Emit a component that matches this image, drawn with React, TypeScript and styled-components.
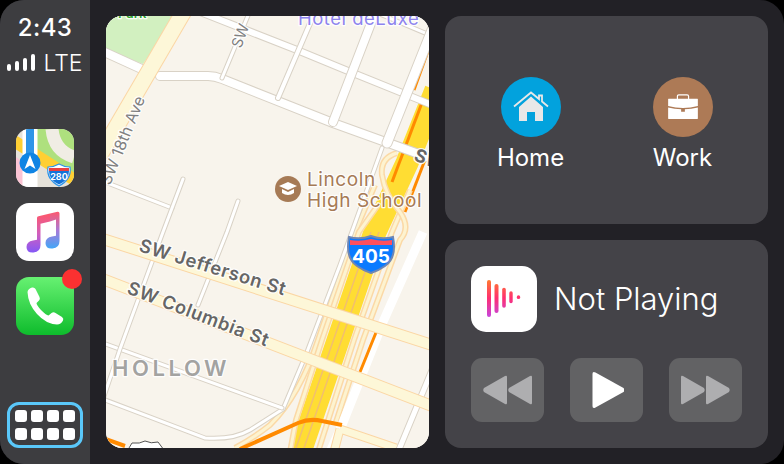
import React from 'react';
import styled, { createGlobalStyle } from 'styled-components';

const GlobalStyle = createGlobalStyle`
    html, body {
        margin: 0;
        padding: 0;
        width: 784px;
        height: 464px;
        overflow: hidden;
        background: #000;
        font-family: Inter, "Liberation Sans", sans-serif;
    }
`;

const Screen = styled.div`
    display: flex;
    width: 784px;
    height: 464px;
    border-radius: 24px;
    overflow: hidden;
    background: #222126;
`;

const Sidebar = styled.aside`
    display: flex;
    flex-direction: column;
    align-items: center;
    flex: 0 0 90px;
    height: 464px;
    padding: 14px 0 16px;
    box-sizing: border-box;
    background: #3d3d40;
`;

const Time = styled.div`
    color: #fff;
    font-size: 24px;
    line-height: 28px;
    font-weight: 500;
    letter-spacing: 0.4px;
`;

const StatusRow = styled.div`
    display: flex;
    align-items: flex-end;
    gap: 8px;
    margin-top: 8px;
    height: 26px;
`;

const Bars = styled.div`
    display: flex;
    align-items: flex-end;
    gap: 4px;
    padding-bottom: 5px;
`;

const Bar = styled.span<{ $height: number }>`
    display: block;
    width: 4px;
    height: ${props => props.$height}px;
    border-radius: 2px;
    background: #fff;
`;

const Lte = styled.div`
    color: #fff;
    font-size: 23px;
    line-height: 26px;
    font-weight: 300;
`;

const AppList = styled.div`
    display: flex;
    flex-direction: column;
    gap: 16px;
    margin-top: 53px;
`;

const AppIcon = styled.div`
    position: relative;
    width: 58px;
    height: 58px;
    border-radius: 13px;
`;

const IconArt = styled.svg`
    display: block;
    width: 58px;
    height: 58px;
    border-radius: 13px;
`;

const Badge = styled.span`
    position: absolute;
    top: -8px;
    right: -8px;
    width: 20px;
    height: 20px;
    border-radius: 50%;
    background: #fb3131;
`;

const AppsButton = styled.div`
    display: grid;
    grid-template-columns: repeat(4, 12px);
    grid-template-rows: repeat(2, 12px);
    gap: 6px 4px;
    justify-content: center;
    align-content: center;
    width: 76px;
    height: 46px;
    margin-top: auto;
    box-sizing: border-box;
    border: 3px solid #5ac8fa;
    border-radius: 12px;
`;

const AppsDot = styled.span`
    border-radius: 3px;
    background: #fff;
`;

const Main = styled.main`
    display: flex;
    flex: 1;
    gap: 16px;
    height: 464px;
    padding: 16px;
    box-sizing: border-box;
`;

const MapPanel = styled.section`
    flex: 0 0 323px;
    height: 432px;
    border-radius: 16px;
    overflow: hidden;
    background: #f8f4ec;
`;

const MapArt = styled.svg`
    display: block;
    width: 323px;
    height: 432px;
    font-family: Inter, "Liberation Sans", sans-serif;

    text {
        paint-order: stroke;
        stroke: rgba(255, 255, 255, 0.9);
        stroke-width: 2.5px;
        stroke-linejoin: round;
    }
`;

const RightColumn = styled.div`
    display: flex;
    flex-direction: column;
    flex: 1;
    gap: 16px;
`;

const Card = styled.section`
    flex: 0 0 208px;
    box-sizing: border-box;
    border-radius: 16px;
    background: #444348;
`;

const PlacesCard = styled(Card)`
    display: flex;
    justify-content: center;
    align-items: center;
    padding-top: 10px;
`;

const Place = styled.div`
    display: flex;
    flex-direction: column;
    align-items: center;
    gap: 6px;
    width: 152px;
`;

const PlaceCircle = styled.div<{ $color: string }>`
    display: flex;
    align-items: center;
    justify-content: center;
    width: 60px;
    height: 60px;
    border-radius: 50%;
    background: ${props => props.$color};
`;

const PlaceLabel = styled.div`
    color: #fff;
    font-size: 24px;
    line-height: 30px;
    font-weight: 400;
`;

const PlayerCard = styled(Card)`
    display: flex;
    flex-direction: column;
    gap: 26px;
    padding: 26px;
`;

const NowPlaying = styled.div`
    display: flex;
    align-items: center;
    gap: 17px;
`;

const PodcastIcon = styled.div`
    display: flex;
    align-items: center;
    justify-content: center;
    width: 66px;
    height: 66px;
    border-radius: 15px;
    background: #fff;
`;

const Title = styled.div`
    color: #fff;
    font-size: 31px;
    line-height: 38px;
    font-weight: 300;
`;

const Controls = styled.div`
    display: flex;
    justify-content: space-between;
`;

const ControlButton = styled.button`
    display: flex;
    align-items: center;
    justify-content: center;
    width: 73px;
    height: 64px;
    padding: 0;
    border: 0;
    border-radius: 11px;
    background: #626264;
`;

const Mirrored = styled.span`
    display: flex;
    transform: scaleX(-1);
`;

// coordinates below are screen pixels, the map svg uses the same space via its viewBox
const streets: { d: string; w: number }[] = [
    { d: 'M100 50 L146 71', w: 8 },
    { d: 'M160 76 L208 76 Q215 76 222 79 L333 123 L430 158', w: 8 },
    { d: 'M190 8 L297 50 L348 71 L432 105', w: 6 },
    { d: 'M375 12 L432 36', w: 3 },
    { d: 'M320 0 L278 98', w: 4 },
    { d: 'M380 0 L333 122', w: 8 },
    { d: 'M252 6 L222 78', w: 3 },
    { d: 'M432 30 L387 143', w: 9 },
    { d: 'M382 148 L340 265 L307 352 L283 409 L250 430 Q233 440 205 438 L100 398', w: 3 },
    { d: 'M100 342 L282 408', w: 3 },
    { d: 'M100 180 L172 208', w: 3 },
    { d: 'M100 130 L116 137', w: 3 },
    { d: 'M183 179 L163 232 L120 349 L102 402', w: 3 },
    { d: 'M238 201 L227 232 L198 305', w: 3 },
    { d: 'M432 370 L398 452', w: 5 },
];

const ramps: string[] = [
    'M375 185 L355 232 L318 340 Q300 395 270 425 Q255 437 235 448',
    'M378 205 L359 232 L322 340 L296 420 L290 452',
    'M410 190 L392 232 L354 340 L325 430 L318 452',
    'M397 153 Q380 158 382 175 Q385 195 400 212 Q411 228 400 240 L363 340 L335 425',
];

const Road = ({ d, w }: { d: string; w: number }) => (
    <>
        <path d={d} fill="none" stroke="#d9d2c6" strokeWidth={w + 2} strokeLinecap="round" />
        <path d={d} fill="none" stroke="#fff" strokeWidth={w} strokeLinecap="round" />
    </>
);

const Avenue = ({ d, w }: { d: string; w: number }) => (
    <>
        <path d={d} fill="none" stroke="#fbd6a4" strokeWidth={w + 2} />
        <path d={d} fill="none" stroke="#fdf7d8" strokeWidth={w} />
    </>
);

const MapView = () => (
    <MapArt viewBox="106 16 323 432">
        <rect x="106" y="16" width="323" height="432" fill="#f8f4ec" />
        <path d="M106 16 H176 L143 64 L106 50 Z" fill="#d2f0c0" />

        {/* freeway, under the surface streets */}
        <path d="M436 90 L407 163 L375 232 L300 452" fill="none" stroke="#ffdd33" strokeWidth={23} />
        <path d="M432 40 L414 90" fill="none" stroke="#ff8a00" strokeWidth={3} />
        <path d="M423 100 L392 182" fill="none" stroke="#ff8a00" strokeWidth={3} />
        <path d="M428 152 L405 212" fill="none" stroke="#ff8a00" strokeWidth={3} />
        <path d="M379 232 L304 448 M371 232 L296 448" fill="none" stroke="#f2bf6e" strokeWidth={1.5} />
        {ramps.map(d => (
            <React.Fragment key={d}>
                <path d={d} fill="none" stroke="#fbd9a6" strokeWidth={6} />
                <path d={d} fill="none" stroke="#fdf3d0" strokeWidth={3} />
            </React.Fragment>
        ))}

        {streets.map(street => (
            <Road key={street.d} d={street.d} w={street.w} />
        ))}
        <Avenue d="M187 6 L100 155" w={15} />

        <path d="M423 232 L383 322 L342 425 L330 452" fill="none" stroke="#fff" strokeWidth={9} />
        <path d="M377 330 L360 372" fill="none" stroke="#ff8a00" strokeWidth={3} />

        <Avenue d="M100 238 L432 345" w={10} />
        <Avenue d="M100 278 L432 406" w={10} />
        <Avenue d="M340 429 L396 448 M340 429 L334 452" w={7} />
        <path d="M240 449 L298 423 Q310 418 322 421 L342 425" fill="none" stroke="#ff8a00" strokeWidth={4} />
        <path d="M100 437 L125 446" fill="none" stroke="#ff8a00" strokeWidth={4} />
        <path d="M129 448 L132 443 Q140 444 145 441 Q151 444 158 442 L164 450" fill="#fff" stroke="#555" strokeWidth={1} />

        <text x="298" y="25" fontSize="18.5" fill="#8d83ee" letterSpacing="0.5">Hotel deLuxe</text>
        <text x="118" y="17.5" fontSize="13" fill="#2fa52f" fontWeight="600">Park</text>
        <text transform="translate(110 186) rotate(-68)" fontSize="16" fill="#808080">SW 18th Ave</text>
        <text transform="translate(241 49) rotate(-70)" fontSize="15" fill="#808080">SW</text>
        <text transform="translate(413 160) rotate(21)" fontSize="18" fontWeight="700" fill="#666">SW</text>

        <circle cx="288" cy="189" r="13" fill="#a67a55" />
        <path d="M279 186 L288 182 L297 186 L288 190 Z" fill="#fff" />
        <path d="M282 189 V193 Q288 197 294 193 V189 L288 192 Z" fill="#fff" />
        <text x="307" y="186" fontSize="19" fill="#a67a55" letterSpacing="0.6">Lincoln</text>
        <text x="307" y="207" fontSize="19" fill="#a67a55" letterSpacing="0.6">High School</text>

        <text transform="translate(138 251) rotate(17)" fontSize="18.4" fontWeight="600" fill="#666" letterSpacing="0.6">SW Jefferson St</text>
        <text transform="translate(126 293) rotate(21)" fontSize="18.3" fontWeight="600" fill="#666" letterSpacing="0.6">SW Columbia St</text>
        <text x="112" y="376" fontSize="22" fontWeight="600" fill="#a3a3a1" letterSpacing="3.6">HOLLOW</text>

        {/* interstate shield */}
        <path
            d="M349 237 Q360 240 371 236 Q382 240 393 237 Q397 258 385 266 Q378 271 371 273 Q364 271 357 266 Q345 258 349 237 Z"
            fill="#0a7aff"
            stroke="#6f86b4"
            strokeWidth={2}
        />
        <path d="M350 240 Q360 242 371 239 Q382 242 392 240 L392 245 H350 Z" fill="#ff4f5f" />
        <text x="371" y="263" textAnchor="middle" fontSize="19" fontWeight="700" fill="#fff" style={{ stroke: 'none' }}>405</text>
    </MapArt>
);

const MapsIcon = () => (
    <IconArt viewBox="0 0 58 58">
        <rect width="58" height="58" fill="#e6e2da" />
        <path d="M21 0 H58 V50 L21 26 Z" fill="#aee07e" />
        <path d="M36 0 Q38 22 58 28" fill="none" stroke="#f0ede4" strokeWidth={13} />
        <path d="M-2 12 L60 52" stroke="#ffcf33" strokeWidth={12} fill="none" />
        <path d="M0 28 L7 33 V58 H0 Z" fill="#fbc4d4" />
        <path d="M14 0 V58" stroke="#fff" strokeWidth={15} fill="none" />
        <path d="M14 0 V34" stroke="#2f95e8" strokeWidth={8} fill="none" />
        <circle cx="14" cy="34" r="10.5" fill="#0f84e4" />
        <path d="M14 26 L19.5 40 L14 36.5 L8.5 40 Z" fill="#fff" />
        <path d="M32 38 Q38 38 43 35 Q48 38 54 38 Q56 50 43 57 Q30 50 32 38 Z" fill="#fff" stroke="#2f95e8" strokeWidth={1.2} />
        <rect x="33" y="39" width="20" height="3" fill="#e84040" />
        <path d="M33 42 H53 Q53 51 43 55.5 Q33 51 33 42 Z" fill="#1473d8" />
        <text x="43" y="51" textAnchor="middle" fontSize="9" fontWeight="700" fill="#fff">280</text>
    </IconArt>
);

const MusicIcon = () => (
    <IconArt viewBox="0 0 58 58">
        <defs>
            <linearGradient id="musicLeft" gradientUnits="userSpaceOnUse" x1="0" y1="12" x2="0" y2="50">
                <stop offset="0" stopColor="#fb5870" />
                <stop offset="0.5" stopColor="#d05fbe" />
                <stop offset="1" stopColor="#8258f8" />
            </linearGradient>
            <linearGradient id="musicRight" gradientUnits="userSpaceOnUse" x1="0" y1="9" x2="0" y2="46">
                <stop offset="0" stopColor="#fb5870" />
                <stop offset="0.5" stopColor="#a87ad8" />
                <stop offset="1" stopColor="#3fa8f8" />
            </linearGradient>
        </defs>
        <rect width="58" height="58" fill="#fff" />
        <path
            d="M21 15 Q21 13.500 22.500 13.200 L34 10.500 V18.500 L24.500 20.700 V42 Q24.500 49 17.500 49.500 Q10.500 50 10.500 44 Q10.500 38.500 17 37.500 L21 36.700 Z"
            fill="url(#musicLeft)"
        />
        <path
            d="M34 10.500 L41.500 8.800 Q43.500 8.500 43.500 10.500 V38 Q43.500 45 36.500 45.500 Q29.500 46 29.500 40 Q29.500 34.500 36 33.500 L40 32.700 V16.500 L34 18.500 Z"
            fill="url(#musicRight)"
        />
    </IconArt>
);

const PhoneIcon = () => (
    <IconArt viewBox="0 0 58 58">
        <defs>
            <linearGradient id="phoneBg" x1="0" y1="0" x2="0" y2="1">
                <stop offset="0" stopColor="#67f172" />
                <stop offset="1" stopColor="#0ebc2c" />
            </linearGradient>
        </defs>
        <rect width="58" height="58" fill="url(#phoneBg)" />
        <path
            d="M11.500 15 Q12 11.500 16 10.500 Q18.500 10 19.500 12 L23.500 20 Q24.500 22 23 23.500 L20.500 26 Q20.500 28 25 33 Q30 38 32.500 38.500 L35.500 36 Q37.500 34.500 39.500 36 L46 40 Q48 41.500 47 43.500 Q45 47.500 41 47.500 Q30 47 21 37 Q12 27 11.500 15 Z"
            fill="#fff"
        />
    </IconArt>
);

const HomeGlyph = () => (
    <svg width="36" height="32" viewBox="0 0 36 32">
        <path d="M1 15.500 L18 1.500 L26 8 V4.500 H29 V10.500 L35 15.500" fill="none" stroke="#e8e8e8" strokeWidth={1.8} />
        <path d="M6 16 L18 5.500 L30 16 V30 H22 V21 H14 V30 H6 Z" fill="#e8e8e8" />
    </svg>
);

const WorkGlyph = () => (
    <svg width="32" height="26" viewBox="0 0 34 28">
        <path d="M11 5.500 V2.500 Q11 1 12.500 1 H21.500 Q23 1 23 2.500 V5.500" fill="none" stroke="#fff" strokeWidth={1.3} />
        <path d="M1 5.500 Q1 5 1.500 5 H32.500 Q33 5 33 5.500 V13 Q17 17 1 13 Z" fill="#fff" />
        <path d="M1 14.500 Q8 16 15 16.500 V19 H19 V16.500 Q26 16 33 14.500 V26.500 Q33 27 32.500 27 H1.500 Q1 27 1 26.500 Z" fill="#fff" />
    </svg>
);

const PodcastGlyph = () => (
    <svg width="36" height="38" viewBox="0 0 36 38">
        <defs>
            <linearGradient id="podcastWave" gradientUnits="userSpaceOnUse" x1="0" y1="0" x2="0" y2="36">
                <stop offset="0" stopColor="#ff7a2f" />
                <stop offset="0.5" stopColor="#ff2f70" />
                <stop offset="1" stopColor="#c945d8" />
            </linearGradient>
        </defs>
        <g stroke="url(#podcastWave)" strokeLinecap="round" fill="none">
            <path d="M3 2 V35" strokeWidth={4} />
            <path d="M10.500 6 V31" strokeWidth={4} />
            <path d="M18 9.500 V26" strokeWidth={3.6} />
            <path d="M25 13 V21.500" strokeWidth={3.4} />
            <path d="M32.500 17 V17.400" strokeWidth={3.4} />
        </g>
    </svg>
);

const Transport = ({ kind }: { kind: 'back' | 'play' | 'forward' }) => {
    if (kind === 'play') {
        return (
            <svg width="34" height="38" viewBox="-1.500 0 34 38">
                <path d="M1 3 Q1 0 4 1.500 L32 17 Q34 19 32 21 L4 36.500 Q1 38 1 35 Z" fill="#fff" />
            </svg>
        );
    }
    const glyph = (
        <svg width="51" height="30" viewBox="0 0 51 30">
            <path d="M1 2 Q1 0 3 1 L24 13 Q25.500 15 24 17 L3 29 Q1 30 1 28 Z" fill="#aeaeb0" />
            <path d="M26 2 Q26 0 28 1 L49 13 Q50.500 15 49 17 L28 29 Q26 30 26 28 Z" fill="#aeaeb0" />
        </svg>
    );
    return kind === 'back' ? <Mirrored>{glyph}</Mirrored> : glyph;
};

const App = () => (
    <>
        <GlobalStyle />
        <Screen>
            <Sidebar>
                <Time>2:43</Time>
                <StatusRow>
                    <Bars>
                        {[7, 10, 13, 17].map(height => (
                            <Bar key={height} $height={height} />
                        ))}
                    </Bars>
                    <Lte>LTE</Lte>
                </StatusRow>
                <AppList>
                    <AppIcon>
                        <MapsIcon />
                    </AppIcon>
                    <AppIcon>
                        <MusicIcon />
                    </AppIcon>
                    <AppIcon>
                        <PhoneIcon />
                        <Badge />
                    </AppIcon>
                </AppList>
                <AppsButton>
                    {Array.from({ length: 8 }, (_, index) => (
                        <AppsDot key={index} />
                    ))}
                </AppsButton>
            </Sidebar>
            <Main>
                <MapPanel>
                    <MapView />
                </MapPanel>
                <RightColumn>
                    <PlacesCard>
                        <Place>
                            <PlaceCircle $color="#02a2dd">
                                <HomeGlyph />
                            </PlaceCircle>
                            <PlaceLabel>Home</PlaceLabel>
                        </Place>
                        <Place>
                            <PlaceCircle $color="#ad7a56">
                                <WorkGlyph />
                            </PlaceCircle>
                            <PlaceLabel>Work</PlaceLabel>
                        </Place>
                    </PlacesCard>
                    <PlayerCard>
                        <NowPlaying>
                            <PodcastIcon>
                                <PodcastGlyph />
                            </PodcastIcon>
                            <Title>Not Playing</Title>
                        </NowPlaying>
                        <Controls>
                            <ControlButton>
                                <Transport kind="back" />
                            </ControlButton>
                            <ControlButton>
                                <Transport kind="play" />
                            </ControlButton>
                            <ControlButton>
                                <Transport kind="forward" />
                            </ControlButton>
                        </Controls>
                    </PlayerCard>
                </RightColumn>
            </Main>
        </Screen>
    </>
);

export default App;
